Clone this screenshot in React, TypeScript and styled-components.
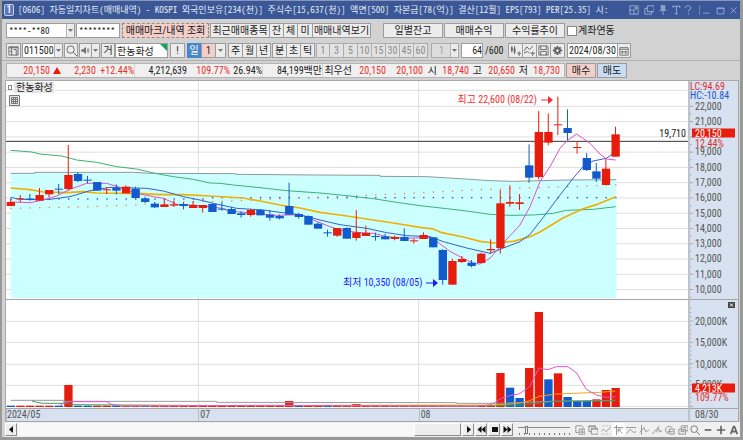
import React from "react";
import styled, { createGlobalStyle, css } from "styled-components";

const RED = "#e81c0c";
const BLUE = "#125bcd";
const FONT = '"Roboto Condensed", "Noto Sans CJK KR", "Liberation Sans", sans-serif';
const MONO = '"Noto Sans Mono CJK KR", "Noto Sans CJK KR", "Liberation Sans", monospace';

const GlobalStyle = createGlobalStyle`
  * { box-sizing: border-box; }
  body { margin: 0; background: #9b9b9b; font: 10px/12px ${FONT}; color: #222; }
  button, input, select { font: inherit; color: inherit; margin: 0; border-radius: 0; }
  svg { display: block; }
`;

/* ---------- window ---------- */

const Window = styled.div`
  display: flex;
  flex-direction: column;
  height: 100vh;
  min-height: 300px;
  background: #d2d2d2;
  border: solid #999;
  border-width: 0 3px 3px 2px;
`;

const TitleBar = styled.header`
  display: flex;
  align-items: center;
  flex: none;
  height: 19px;
  padding-left: 2px;
  gap: 4px;
  background: #3a5797;
  border-top: 1px solid #8a97b8;
  color: #e6ebf5;
`;

const AppBadge = styled.span`
  flex: none;
  width: 10px;
  height: 12px;
  line-height: 10px;
  text-align: center;
  font-weight: 700;
  border: 1px solid #c4d0e8;
  border-radius: 2px;
  background: #5a78b8;
`;

const Title = styled.h1`
  flex: 1;
  min-width: 0;
  margin: 0;
  font-family: ${MONO};
  font-size: 9px;
  line-height: 16px;
  font-weight: 400;
  white-space: pre;
  overflow: hidden;
`;

const TitleTools = styled.div`
  display: flex;
  flex: none;
  align-items: center;
  color: #a9b8da;
`;

const ToolsRule = styled.i`
  width: 1px;
  height: 10px;
  margin-left: 5px;
  background: #6f86b8;
`;

const TitleButton = styled.button<{ $w: number }>`
  display: grid;
  place-items: center;
  width: ${(p) => p.$w}px;
  height: 16px;
  padding: 0;
  border: 0;
  background: none;
`;

/* ---------- tool bars ---------- */

const Toolbar = styled.div<{ $top: number }>`
  display: flex;
  flex: none;
  height: 15px;
  margin: ${(p) => p.$top}px 4px 0;
  white-space: nowrap;
`;

const Group = styled.div<{ $gap?: number; $ml?: number }>`
  display: flex;
  flex: none;
  gap: ${(p) => p.$gap ?? 0}px;
  margin-left: ${(p) => p.$ml ?? 1}px;
`;

const Button = styled.button<{ $w: number; $tone?: "pink" | "blue" | "sky"; $muted?: boolean; $join?: boolean }>`
  display: flex;
  align-items: center;
  justify-content: center;
  flex: none;
  width: ${(p) => p.$w}px;
  height: 15px;
  padding: 0;
  line-height: 12px;
  white-space: nowrap;
  border: 1px solid #9c9c9c;
  background: #ececec;
  svg { color: #606060; }
  ${(p) => p.$join && css`border-left-width: 0;`}
  ${(p) => p.$muted && css`color: #8c8c8c; background: #e2e2e2; border-color: #acacac;`}
  ${(p) => p.$tone === "pink" && css`background: #f3cfca;`}
  ${(p) => p.$tone === "blue" && css`background: #4a86cc; border-color: #4a86cc; color: #fff;`}
  ${(p) => p.$tone === "sky" && css`background: #c8ddf3;`}
`;

const QueryButton = styled(Button)`
  border: 1px dashed #a08480;
  color: #111;
`;

const Field = styled.input<{ $w: number; $right?: boolean; $mono?: boolean }>`
  flex: none;
  width: ${(p) => p.$w}px;
  height: 15px;
  padding: 0 0 0 1px;
  border: 1px solid #9c9c9c;
  background: #fff;
  line-height: 13px;
  text-align: ${(p) => (p.$right ? "right" : "left")};
  ${(p) => p.$mono && css`padding-left: 2px; font-family: ${MONO}; font-size: 9px;`}
`;

const SelectBox = styled.span<{ $w: number; $muted?: boolean; $mono?: boolean }>`
  position: relative;
  flex: none;
  width: ${(p) => p.$w}px;
  height: 15px;
  color: ${(p) => (p.$muted ? "#8c8c8c" : "#222")};

  select {
    appearance: none;
    display: block;
    width: 100%;
    height: 15px;
    padding: 0 0 0 ${(p) => (p.$muted ? 7 : 1)}px;
    border: 1px solid #9c9c9c;
    background: ${(p) => (p.$muted ? "#e2e2e2" : "#fff")};
    line-height: 13px;
    outline: 0;
    ${(p) => p.$mono && css`padding-left: 2px; font-family: ${MONO}; font-size: 9px;`}
  }
`;

const SelectArrow = styled.span`
  position: absolute;
  inset: 1px 1px 1px auto;
  width: 8px;
  display: grid;
  place-items: center;
  background: #ececec;
  border-left: 1px solid #b4b4b4;
  pointer-events: none;
`;

const NameBox = styled.span`
  position: relative;
  flex: none;
  svg { position: absolute; top: 1px; right: 1px; }
`;

const Check = styled.label`
  display: flex;
  align-items: center;
  gap: 1px;
  margin-left: 2px;

  input {
    appearance: none;
    width: 10px;
    height: 10px;
    border: 1px solid #888;
    background: #fff;
  }
`;

const Total = styled.span`
  width: 25px;
  padding-left: 2px;
  line-height: 15px;
`;

const Divider = styled.hr`
  flex: none;
  width: 100%;
  height: 1px;
  margin: 2px 0 0;
  border: 0;
  background: #b0b0b0;
`;

/* ---------- quote row ---------- */

const QuoteStrip = styled.div`
  display: flex;
  flex: none;
  width: 559px;
  height: 15px;
  border: 1px solid #b4b4b4;
  background: #f0f0f0;
  line-height: 13px;
`;

const Quote = styled.span<{ $w: number; $up?: boolean; $rule?: boolean }>`
  display: flex;
  flex: none;
  align-items: center;
  justify-content: flex-end;
  gap: 3px;
  width: ${(p) => p.$w}px;
  ${(p) => p.$up && css`color: #e8302a;`}
  ${(p) => p.$rule && css`border-right: 1px solid #d4d4d4;`}
`;

/* ---------- chart ---------- */

const ChartFrame = styled.main`
  flex: 1;
  display: grid;
  grid-template-columns: minmax(0, 1fr) 50px;
  grid-template-rows: minmax(0, 219fr) minmax(0, 109fr) 13px;
  min-height: 0;
  margin: 2px 1px 0 3px;
  border: solid #a8a8a8;
  border-width: 1px 1px 0 1px;
`;

const Plot = styled.section`
  position: relative;
  min-height: 0;
  overflow: hidden;
  background: #fff;
  border-bottom: 1px solid #a4a4a4;
  > svg { width: 100%; height: 100%; }
`;

const Axis = styled.div`
  position: relative;
  overflow: hidden;
  background: #d7e1ef;
  border-left: 2px solid #bcc3cd;
  border-bottom: 1px solid #a4a4a4;
  > svg { width: 3px; height: 100%; }
`;

const Tick = styled.span<{ $tone?: "badge" | "red" }>`
  position: absolute;
  left: 5px;
  transform: translateY(-50%);
  line-height: 9px;
  color: #555;
  ${(p) => p.$tone === "red" && css`color: #e03030;`}
  ${(p) => p.$tone === "badge" && css`
    left: 2px;
    right: 3px;
    padding-left: 3px;
    background: ${RED};
    color: #fff;
  `}
`;

const Changes = styled.div`
  position: absolute;
  top: 1px;
  left: 0;
  line-height: 9px;
  color: ${BLUE};
  white-space: nowrap;
  em { display: block; font-style: normal; color: #e03030; }
`;

const CloseBox = styled.button`
  position: absolute;
  top: 2px;
  right: 3px;
  width: 7px;
  height: 6px;
  padding: 0;
  border: 0;
  background: #444;
`;

const Legend = styled.div`
  position: absolute;
  top: 1px;
  left: 2px;
  display: flex;
  flex-direction: column;
  gap: 2px;
`;

const LegendName = styled.div`
  display: flex;
  align-items: center;
  gap: 2px;
  line-height: 11px;
  i { width: 4px; height: 5px; border: 1px solid #888; }
  span { padding: 0 1px 0 2px; background: #e6e6e6; }
`;

const LegendIcon = styled.div`
  padding-left: 1px;
`;

const Note = styled.div<{ $color: string }>`
  position: absolute;
  transform: translateY(-50%);
  display: flex;
  align-items: center;
  gap: 4px;
  line-height: 12px;
  white-space: nowrap;
  color: ${(p) => p.$color};
`;

const DateRow = styled.div`
  position: relative;
  height: 13px;
  background: #d7e1ef;
  border-bottom: 1px solid #a4a4a4;
  line-height: 12px;
  color: #555;
`;

const DateMark = styled.span`
  position: absolute;
  padding-left: 1px;
  border-left: 1px solid #b4bcc8;
  &:first-child { padding-left: 0; }
`;

const LastDate = styled(DateRow)`
  padding-left: 5px;
  border-left: 2px solid #bcc3cd;
`;

/* ---------- bottom bar ---------- */

const BottomBar = styled.footer`
  display: flex;
  flex: none;
  align-items: center;
  height: 15px;
  margin-left: 3px;
  background: #f0f0f0;
  color: #111;
`;

const StepButton = styled.button`
  display: grid;
  place-items: center;
  flex: none;
  width: 12px;
  height: 13px;
  padding: 0;
  margin-right: 1px;
  border: 1px solid;
  border-color: #fff #8c8c8c #8c8c8c #fff;
  background: #eee;
`;

const ScrollTrack = styled.div`
  flex: 1;
  display: flex;
  justify-content: flex-end;
  height: 13px;
  margin-right: 1px;
  background: #f8f8f8;
`;

const ScrollThumb = styled.div`
  width: 47px;
  border: 1px solid;
  border-color: #fff #8c8c8c #8c8c8c #fff;
  background: #eee;
`;

const ZoomSlider = styled.input`
  appearance: none;
  flex: none;
  width: 52px;
  height: 12px;
  margin: 0 4px;
  background:
    linear-gradient(#888, #888) 0 3px / 100% 1px no-repeat,
    repeating-linear-gradient(90deg, #777 0 1px, transparent 1px 5px) 1px 9px / 100% 2px no-repeat;

  &::-webkit-slider-thumb {
    appearance: none;
    width: 3px;
    height: 8px;
    background: #f4f4f4;
    border: 1px solid #777;
  }
`;

const ToolStrip = styled.div`
  display: flex;
  flex: none;
  width: 166px;
`;

const ToolButton = styled.button<{ $on?: boolean; $dark?: boolean }>`
  display: grid;
  place-items: center;
  flex: 1;
  min-width: 0;
  height: 13px;
  padding: 0;
  border: 0;
  background: ${(p) => (p.$on ? "#fff" : "none")};
  color: ${(p) => (p.$dark ? "#666" : "#888")};
`;

/* ---------- icons ---------- */

type IconProps = { d: string; size?: number; fill?: string; w?: number };

const Icon = ({ d, size = 11, fill = "none", w = 1 }: IconProps) => (
  <svg width={size} height={size} viewBox="0 0 12 12" fill={fill} stroke="currentColor" strokeWidth={w} aria-hidden="true">
    <path d={d} />
  </svg>
);

const Down = () => (
  <svg width="5" height="3" viewBox="0 0 5 3" aria-hidden="true">
    <path d="M0 0h5L2.5 3z" fill="#777" />
  </svg>
);

const Up = () => (
  <svg width="8" height="7" viewBox="0 0 8 7" aria-hidden="true">
    <path d="M4 0l4 7H0z" fill={RED} />
  </svg>
);

const Solid = ({ d }: { d: string }) => (
  <svg width="9" height="9" viewBox="0 0 9 9" fill="currentColor" aria-hidden="true">
    <path d={d} />
  </svg>
);

/* ---------- chart data ---------- */

// Drawing units: three per pixel at the default window size.
const FIRST_X = 32;
const STEP = 28.8;
const xAt = (i: number) => FIRST_X + STEP * i;

// [rising, body top, body bottom, wick top, wick bottom]
type Candle = [0 | 1, number, number, number, number];
const candles: Candle[] = [
  [1, 366, 378, 357, 378], [1, 355, 358, 345, 367], [0, 356, 360, 342, 362], [1, 345, 362, 324, 362],
  [1, 330, 343, 330, 352], [0, 326, 329, 312, 342], [1, 285, 327, 195, 330], [0, 282, 303, 276, 306],
  [0, 299, 301, 288, 310], [0, 306, 332, 306, 332], [1, 328, 331, 322, 342], [0, 324, 332, 313, 343],
  [1, 320, 340, 316, 340], [0, 326, 354, 320, 357], [0, 355, 366, 350, 369], [0, 371, 382, 366, 384],
  [1, 373, 381, 355, 381], [1, 373, 377, 361, 381], [0, 372, 378, 367, 388], [1, 375, 384, 363, 384],
  [1, 375, 384, 375, 398], [0, 372, 396, 370, 396], [0, 386, 388, 366, 392], [0, 387, 402, 381, 402],
  [0, 400, 405, 394, 413], [1, 390, 405, 386, 410], [0, 390, 406, 388, 406], [0, 404, 413, 390, 422],
  [0, 408, 415, 404, 418], [0, 378, 404, 308, 404], [0, 402, 411, 398, 416], [0, 408, 434, 406, 434],
  [0, 431, 446, 427, 446], [0, 457, 460, 449, 470], [1, 444, 467, 444, 470], [0, 444, 476, 442, 476],
  [1, 457, 474, 390, 482], [1, 459, 468, 437, 468], [0, 468, 470, 458, 482], [0, 469, 478, 461, 478],
  [1, 471, 477, 467, 481], [0, 471, 483, 445, 483], [1, 481, 483, 476, 491], [1, 465, 477, 457, 477],
  [0, 472, 502, 472, 502], [0, 510, 600, 508, 614], [1, 543, 614, 536, 614], [1, 537, 546, 528, 549],
  [0, 548, 558, 540, 562], [1, 521, 549, 518, 549], [1, 507, 511, 478, 521], [1, 370, 504, 330, 521],
  [1, 366, 371, 316, 380], [1, 367, 372, 342, 390], [0, 256, 293, 193, 308], [1, 156, 291, 93, 298],
  [1, 156, 188, 100, 196], [1, 133, 136, 50, 165], [0, 144, 159, 88, 180], [1, 201, 203, 183, 221],
  [0, 234, 270, 219, 273], [0, 274, 296, 249, 306], [1, 266, 315, 237, 315], [1, 163, 230, 140, 230],
];

const envelope =
  "32,280 104,280 104,277 400,277 450,280 708,281 708,283 960,285 1140,286 1140,289 1280,290 1380,296 1470,302 1540,304 1620,302 1700,300 1849,299";

const priceLines: { color: string; width: number; points: string }[] = [
  { color: "#8f9a9a", width: 3, points: envelope },
  {
    color: "#3cb371", width: 3,
    points: "32,211 95,216 120,222 185,228 230,240 290,247 350,260 410,267 460,279 520,290 580,298 630,309 660,310 700,315 780,323 860,332 960,339 1050,348 1120,356 1190,367 1260,377 1340,386 1400,393 1470,403 1530,406 1600,405 1660,400 1700,391 1780,388 1847,380",
  },
  {
    color: "#f0b000", width: 5,
    points: "32,324 90,329 130,336 200,338 250,335 290,339 430,341 480,344 550,344 630,348 730,354 780,363 840,375 900,384 960,397 1020,405 1100,417 1180,429 1260,442 1300,447 1325,458 1390,471 1440,484 1480,489 1540,484 1590,470 1620,456 1689,414 1749,386 1789,374 1847,350",
  },
  {
    color: "#3a5fc8", width: 3,
    points: "32,352 60,358 150,358 210,350 270,332 330,322 440,325 490,333 550,350 600,360 640,370 710,385 790,390 840,397 900,404 960,420 1020,434 1100,445 1160,458 1220,467 1290,470 1330,485 1400,504 1470,520 1500,508 1560,485 1590,463 1630,412 1680,345 1720,294 1749,260 1779,243 1819,235 1847,215",
  },
  {
    color: "#e050c8", width: 3,
    points: "32,366 90,368 130,360 170,348 210,328 260,310 320,310 360,322 410,340 460,350 490,355 530,373 590,376 660,384 690,393 760,400 830,406 900,404 940,420 990,440 1020,450 1070,457 1120,460 1160,470 1220,475 1290,472 1310,484 1350,514 1390,535 1420,550 1440,552 1470,535 1500,500 1530,467 1560,435 1590,380 1620,305 1650,260 1680,205 1700,183 1730,162 1770,190 1800,222 1820,237 1847,240",
  },
];

const orangeStops = [
  [0, 385], [300, 378], [400, 374], [500, 366], [700, 362], [800, 357], [900, 352],
  [1060, 347], [1260, 337], [1400, 330], [1520, 325], [1700, 319], [1860, 313],
];
const orangeAt = (x: number) => {
  const k = orangeStops.findIndex((s) => s[0] > x);
  const [x0, y0] = orangeStops[k - 1];
  const [x1, y1] = orangeStops[k];
  return y0 + ((x - x0) / (x1 - x0)) * (y1 - y0);
};

const priceY = (p: number) => 79 + ((22000 - p) / 1000) * 45.8;
const pricePct = (y: number) => `${((y - 3) / 654) * 100}%`;
const volumePct = (y: number) => `${((y - 30) / 324) * 100}%`;
const prices = Array.from({ length: 13 }, (_, i) => 22000 - i * 1000);
const months = [{ x: 595, label: "07" }, { x: 1256, label: "08" }];

// Top edge of each tall volume bar; the others lie just above the base line.
const volumeTops: Record<number, number> = {
  6: 285, 29: 333, 36: 342, 43: 345, 50: 345, 51: 249, 52: 293, 53: 324, 54: 234, 55: 66, 56: 268,
  57: 250, 58: 321, 59: 333, 60: 333, 61: 328, 62: 300, 63: 294,
};
const shrinkingVolume = new Set([0, 5, 7, 8, 11, 14, 30, 33, 52, 53, 56, 58, 59, 60]);

const volumeLines = [
  { color: "#9a9a9a", points: "32,331 190,331 190,334 650,334 650,337 1370,338 1370,340 1479,340 1560,338 1650,334 1846,331" },
  { color: "#34a05c", points: "96,333 110,337 130,340 200,340 220,344 360,345 700,347 1479,347 1560,345 1630,338 1670,334 1846,332" },
  { color: "#f0a818", points: "360,347 1479,345 1530,342 1560,339 1590,332 1617,319 1669,312 1719,310 1799,307 1846,303" },
  { color: "#e455cc", points: "180,347 192,338 205,335 320,335 335,343 360,348 800,346 1420,349 1470,345 1484,338 1504,325 1529,317 1559,311 1589,290 1617,234 1644,239 1669,230 1704,230 1729,248 1759,298 1789,315 1819,322 1846,320" },
];

const volumeLabels = [
  { y: 94, label: "20,000K" }, { y: 157, label: "15,000K" }, { y: 223, label: "10,000K" }, { y: 284, label: "5,000K" },
];

const Grid = ({ rows, top, bottom }: { rows: number[]; top: number; bottom: number }) => (
  <g stroke="#dedede" strokeWidth="3">
    {rows.map((y) => <line key={y} x1="18" x2="2064" y1={y} y2={y} />)}
    {months.map((m) => <line key={m.x} x1={m.x} x2={m.x} y1={top} y2={bottom} />)}
  </g>
);

const PriceChart = () => (
  <svg viewBox="18 3 2046 654" preserveAspectRatio="none" role="img" aria-label="한농화성 일봉">
    <Grid rows={[31, ...prices.map(priceY)]} top={3} bottom={657} />
    <polygon points={`${envelope} 1849,654 32,654`} fill="#ccffff" />
    <line x1="18" x2="2064" y1="184" y2="184" stroke="#333" strokeWidth="3" />
    {candles.map((_, i) => (
      <g key={i}>
        <rect x={xAt(i) - 1} y={i < 21 ? 355 : 351} width="4" height="4" fill="#2038f0" />
        <rect x={xAt(i) - 1} y={orangeAt(xAt(i)) - 1} width="4" height="4" fill="#f08830" />
      </g>
    ))}
    {priceLines.map((l) => (
      <polyline key={l.color} points={l.points} fill="none" stroke={l.color} strokeWidth={l.width} />
    ))}
    {candles.map(([up, t, b, h, l], i) => (
      <g key={i} fill={up ? RED : BLUE}>
        <rect x={xAt(i) - 1.5} y={h} width="3" height={l - h} />
        <rect x={xAt(i) - 12} y={t} width="25" height={Math.max(b - t, 3)} />
      </g>
    ))}
  </svg>
);

const VolumeChart = () => (
  <svg viewBox="18 30 2046 324" preserveAspectRatio="none" role="img" aria-label="거래량">
    <Grid rows={[94, 157, 223, 286, 349]} top={30} bottom={354} />
    {candles.map((_, i) => {
      const top = volumeTops[i] ?? 347;
      return (
        <rect key={i} x={xAt(i) - 12} y={top} width="25" height={351 - top} fill={shrinkingVolume.has(i) ? BLUE : RED} />
      );
    })}
    {volumeLines.map((l) => (
      <polyline key={l.color} points={l.points} fill="none" stroke={l.color} strokeWidth="3" />
    ))}
  </svg>
);

const Arrow = () => (
  <svg width="12" height="8" viewBox="0 0 12 8" aria-hidden="true">
    <path d="M0 4h8" stroke="currentColor" />
    <path d="M7 0l5 4-5 4z" fill="currentColor" />
  </svg>
);

/* ---------- tool definitions ---------- */

const titleTools = [
  { name: "크기", w: 15, d: "M1 1h10v10H1zM1 6h5v5M6 6l3-3M6.5 3H9v2.5" },
  { name: "새 창", w: 15, d: "M4 1h8v7H4zM4 4H1v7h8V8" },
  { name: "고정", w: 14, d: "M3 1h6M4 1v5M8 1v5M5 1v5M6 1v5M7 1v5M2 6.5h8M6 7v5" },
  { name: "글꼴", w: 12, d: "M2 1.5h9M6.5 1v10M4.5 10.5h4M2.5 1v2.5M10.5 1v2.5" },
  { name: "도움말", w: 12, d: "M3 4V2.5L4.5 1h3L9 2.5V5L6.5 6.5V8M6.5 9.5v2" },
];
const windowTools = [
  { name: "최소화", w: 13, d: "M1 9.5h9" },
  { name: "최대화", w: 14, d: "M1.5 2.5h9v8h-9zM1 3.5h10" },
  { name: "닫기", w: 13, d: "M2 2l8 8M10 2l-8 8" },
];

const drawTools = [
  { name: "추가", d: "M10 4V3L8 1H1v8h3M5 5h7v7H5zM8.5 5v7M5 8.5h7" },
  { name: "겹치기", d: "M4 8H1V1h8v3M4 4h8v7H4zM1 2h8M4 5h8" },
  { name: "추세", d: "M1 1h1M4 1h1M7 1h1M10 1h1M1 11h1M4 11h1M7 11h1M10 11h1M0 8l3-3 3 3 6-6" },
  { name: "십자선", d: "M3 0v12M0 3h11M10 10L5 5M5 9V5h4", on: true },
  { name: "수평선", d: "M0 3h12M1 10l4-5 4 4 3-1" },
  { name: "수직선", d: "M3 0v12M1 9l5-6 2 5 4-2" },
  { name: "추세선", d: "M0 11L9 1M5 9l3-5 1 4 3-1" },
  { name: "도형", d: "M1 8a4 4 0 1 1 8-4M1 8l4 3M5 5h6v6H6zM3 8h7" },
  { name: "지우기", d: "M4 1h8v6H4zM1 5h8v6H1zM3 8h4M6 3h4" },
  { name: "검색", d: "M9 5a4 4 0 1 1-8 0 4 4 0 0 1 8 0zM8 8l4 4", dark: true },
  { name: "축소", d: "M2 6h8", w: 2, dark: true },
  { name: "확대", d: "M1 6h10M6 1v10", w: 2, dark: true },
  { name: "글자", d: "M2 11L5.5 2h1L10 11M3.5 8h5", w: 2, dark: true },
];

type DropdownProps = { w: number; muted?: boolean; mono?: boolean; value: string; label: string };

const Dropdown = ({ w, muted, mono, value, label }: DropdownProps) => (
  <SelectBox $w={w} $muted={muted} $mono={mono}>
    <select aria-label={label} defaultValue={value} disabled={muted}>
      <option>{value}</option>
    </select>
    <SelectArrow><Down /></SelectArrow>
  </SelectBox>
);

export default function App() {
  return (
    <Window>
      <GlobalStyle />
      <TitleBar>
        <AppBadge>1</AppBadge>
        <Title>
          {"[0606] 자동일지차트(매매내역) - KOSPI 외국인보유[234(천)] 주식수[15,637(천)] 액면[500] 자본금[78(억)] 결산[12월] EPS[793] PER[25.35] 시:"}
        </Title>
        <TitleTools>
          {titleTools.map((t) => (
            <TitleButton key={t.name} $w={t.w} aria-label={t.name}><Icon d={t.d} size={10} /></TitleButton>
          ))}
          <ToolsRule />
          {windowTools.map((t) => (
            <TitleButton key={t.name} $w={t.w} aria-label={t.name}><Icon d={t.d} size={9} /></TitleButton>
          ))}
        </TitleTools>
      </TitleBar>

      <Toolbar $top={4}>
        <Dropdown w={69} mono value="****-**80" label="계좌" />
        <Group><Field $w={44} $mono defaultValue="********" aria-label="비밀번호" /></Group>
        <Group $ml={2}><QueryButton $w={87} $tone="pink">매매마크/내역 조회</QueryButton></Group>
        <Group>
          <Button $w={60}>최근매매종목</Button>
          <Button $w={14} $join>잔</Button>
          <Button $w={14} $join>체</Button>
          <Button $w={15} $join>미</Button>
          <Button $w={58} $join>매매내역보기</Button>
        </Group>
        <Group $ml={12} $gap={1}>
          <Button $w={60}>일별잔고</Button>
          <Button $w={60}>매매수익</Button>
          <Button $w={60}>수익률추이</Button>
        </Group>
        <Check><input type="checkbox" />계좌연동</Check>
      </Toolbar>

      <Toolbar $top={5}>
        <Button $w={15} aria-label="종목 창"><Icon d="M1 2h10v9H1zM1 3h10M4 2v9M6 5h3v6M2 7h2" /></Button>
        <Group><Dropdown w={41} value="011500" label="종목코드" /></Group>
        <Group><Button $w={14} aria-label="종목 검색"><Icon d="M9 5a4 4 0 1 1-8 0 4 4 0 0 1 8 0zM8 8l4 4" /></Button></Group>
        <Group>
          <Button $w={13} aria-label="소리"><Icon d="M1 5h2l3-3v8L3 7H1zM8 4h3M8 6h3M8 8h3" fill="#777" size={9} /></Button>
          <Button $w={8} $join aria-label="소리 설정"><Down /></Button>
        </Group>
        <Group>
          <Button $w={14}>거</Button>
          <NameBox>
            <Field $w={53} defaultValue="한농화성" aria-label="종목명" />
            <svg width="7" height="7" viewBox="0 0 7 7" aria-hidden="true"><path d="M0 0h7v7z" fill="#12a84c" /></svg>
          </NameBox>
        </Group>
        <Group $ml={2}><Button $w={15}>!</Button></Group>
        <Group $ml={2}>
          <Button $w={14} $tone="blue">일</Button>
          <Button $w={15} $tone="pink">1</Button>
          <Button $w={10} $join aria-label="일 간격"><Down /></Button>
        </Group>
        <Group $ml={2}>
          <Button $w={15}>주</Button>
          <Button $w={14} $join>월</Button>
          <Button $w={14} $join>년</Button>
        </Group>
        <Group>
          <Button $w={15}>분</Button>
          <Button $w={14} $join>초</Button>
          <Button $w={14} $join>틱</Button>
        </Group>
        <Group>
          {["1", "3", "5", "10", "15", "30", "45", "60"].map((n) => (
            <Button key={n} $w={14} $muted $join={n !== "1"}>{n}</Button>
          ))}
        </Group>
        <Group $ml={3}><Dropdown w={28} muted value="1" label="간격" /></Group>
        <Group $ml={2}><Field $w={22} $right defaultValue="64" aria-label="봉 개수" /></Group>
        <Total>/600</Total>
        <Group $ml={0}>
          <Button $w={15} aria-label="봉 종류"><Icon d="M2 1v7M5 1v9M8 9h4M10 7v5M1.5 3h1v3h-1zM4.5 4h1v4h-1z" /></Button>
          <Button $w={14} $join aria-label="지표"><Icon d="M0 7l3-5 3 3 4-4M0 9l4-2 2 2M7 9h5M9.5 7v5" /></Button>
          <Button $w={14} $join aria-label="저장"><Icon d="M1 1h9l1 1v9H1zM3 1v4h6V1M3 11V7h6v4" /></Button>
          <Button $w={14} $join aria-label="설정"><Icon d="M6 1v2M6 9v2M1 6h2M9 6h2M2.5 2.5L4 4M8 8l1.5 1.5M9.5 2.5L8 4M4 8L2.5 9.5M8.5 6a2.500 2.500 0 1 1-5 0 2.500 2.500 0 0 1 5 0z" w={2} /></Button>
        </Group>
        <Group $ml={2}>
          <Field $w={51} defaultValue="2024/08/30" aria-label="기준일" />
          <Button $w={13} $join aria-label="달력"><Icon d="M1 2h10v9H1zM1 4h10M4 6v4M8 6v4M2 7h8" size={10} /></Button>
        </Group>
      </Toolbar>

      <Divider />

      <Toolbar $top={2}>
        <QuoteStrip>
          <Quote $w={54} $up>20,150<Up /></Quote>
          <Quote $w={35} $up>2,230</Quote>
          <Quote $w={39} $up $rule>+12.44%</Quote>
          <Quote $w={52}>4,212,639</Quote>
          <Quote $w={43} $up>109.77%</Quote>
          <Quote $w={33} $rule>26.94%</Quote>
          <Quote $w={60} $rule>84,199백만</Quote>
          <Quote $w={29}>최우선</Quote>
          <Quote $w={34} $up>20,150</Quote>
          <Quote $w={37} $up>20,100</Quote>
          <Quote $w={14}>시</Quote>
          <Quote $w={32} $up>18,740</Quote>
          <Quote $w={13}>고</Quote>
          <Quote $w={33} $up>20,650</Quote>
          <Quote $w={13}>저</Quote>
          <Quote $w={32} $up>18,730</Quote>
        </QuoteStrip>
        <Group $gap={1}>
          <Button $w={30} $tone="pink">매수</Button>
          <Button $w={30} $tone="sky">매도</Button>
        </Group>
      </Toolbar>

      <ChartFrame>
        <Plot>
          <PriceChart />
          <Legend>
            <LegendName><i /><span>한농화성</span></LegendName>
            <LegendIcon>
              <svg width="11" height="11" viewBox="0 0 11 11" fill="#e8e8e8" stroke="#777">
                <path d="M.5.5h10v10H.5zM2.5 2.5h6v6h-6zM4.5 2v7M6.5 2v7M2 4.5h7M2 6.5h7" />
              </svg>
            </LegendIcon>
          </Legend>
          <Note $color="#f03030" style={{ top: pricePct(60), right: "19.8%" }}>최고 22,600 (08/22)<Arrow /></Note>
          <Note $color="#1a1aff" style={{ top: pricePct(608), right: "36.6%" }}>최저 10,350 (08/05)<Arrow /></Note>
          <Note $color="#222" style={{ top: pricePct(163), right: "0.3%" }}>19,710</Note>
        </Plot>
        <Axis>
          <svg viewBox="0 3 9 654" preserveAspectRatio="none" stroke="#888" strokeWidth="2">
            {prices.map((p) => (
              <path key={p} d={`M0 ${priceY(p)}h9M0 ${priceY(p) + 23}h4`} />
            ))}
          </svg>
          <Changes><em>LC:94.69</em>HC:-10.84</Changes>
          {prices.filter((p) => p !== 20000).map((p) => (
            <Tick key={p} style={{ top: pricePct(priceY(p) - 2) }}>{p.toLocaleString("en-US")}</Tick>
          ))}
          <Tick $tone="badge" style={{ top: pricePct(160) }}>20,150</Tick>
          <Tick $tone="red" style={{ top: pricePct(188) }}>12.44%</Tick>
        </Axis>

        <Plot><VolumeChart /></Plot>
        <Axis>
          <svg viewBox="0 30 9 324" preserveAspectRatio="none" stroke="#888" strokeWidth="2">
            {Array.from({ length: 24 }, (_, i) => (
              <path key={i} d={`M0 ${349 - i * 12.8}h${i % 5 === 0 ? 9 : 4}`} />
            ))}
          </svg>
          {volumeLabels.map((v) => (
            <Tick key={v.label} style={{ top: volumePct(v.y - 2) }}>{v.label}</Tick>
          ))}
          <Tick $tone="badge" style={{ top: volumePct(294) }}>4,213K</Tick>
          <Tick $tone="red" style={{ top: volumePct(322) }}>109.77%</Tick>
          <CloseBox aria-label="거래량 닫기">
            <svg width="7" height="6" viewBox="0 0 7 6" stroke="#fff"><path d="M2 1.5l3 3M5 1.5l-3 3" /></svg>
          </CloseBox>
        </Axis>

        <DateRow>
          <DateMark style={{ left: 0 }}>2024/05</DateMark>
          {months.map((m) => (
            <DateMark key={m.label} style={{ left: `${((m.x - 18) / 2046) * 100}%` }}>{m.label}</DateMark>
          ))}
        </DateRow>
        <LastDate>08/30</LastDate>
      </ChartFrame>

      <BottomBar>
        <StepButton aria-label="왼쪽으로"><Solid d="M6 1v7L2 4.500z" /></StepButton>
        <ScrollTrack><ScrollThumb /></ScrollTrack>
        <StepButton aria-label="재생"><Solid d="M3 1v7l4-3.500z" /></StepButton>
        <StepButton aria-label="되감기"><Solid d="M4.500 1v7L.5 4.500zM8.500 1v7l-4-3.500z" /></StepButton>
        <StepButton aria-label="정지"><Solid d="M2 2h6v5H2z" /></StepButton>
        <StepButton aria-label="빨리 감기"><Solid d="M.5 1v7l4-3.500zM4.500 1v7l4-3.500z" /></StepButton>
        <ZoomSlider type="range" min={0} max={100} defaultValue={14} aria-label="확대 비율" />
        <ToolStrip>
          {drawTools.map((t) => (
            <ToolButton key={t.name} $on={t.on} $dark={t.dark} aria-label={t.name}><Icon d={t.d} size={10} w={t.w} /></ToolButton>
          ))}
        </ToolStrip>
      </BottomBar>
    </Window>
  );
}
